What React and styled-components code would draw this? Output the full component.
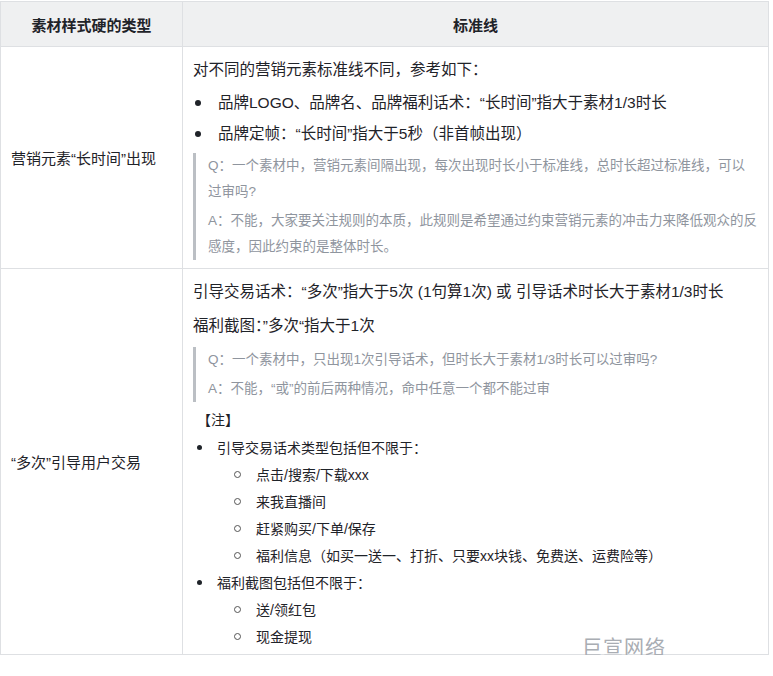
import React from "react";
import styled, { createGlobalStyle } from "styled-components";

const G = createGlobalStyle`
  body { margin: 0; background: #fff; font-family: "Liberation Sans", "Noto Sans CJK SC", sans-serif; color: #1f2329; }
`;
const Wrap = styled.div`position: relative; width: 769px; padding-top: 1px;`;
const Table = styled.table`
  border-collapse: collapse; width: 769px; table-layout: fixed;
  td, th { border: 1px solid #dee0e3; }
`;
const Th = styled.th`
  background: #eff0f1; height: 42px; font-size: 15px; font-weight: 600; color: #1f2329; vertical-align: middle;
`;
const Left = styled.td`font-size: 15px; padding: 0 0 0 10px; vertical-align: middle;`;
const Right = styled.td`padding: 6px 10px 4px 10px; font-size: 15.5px; line-height: 22px; vertical-align: top;`;
const P = styled.div`padding: ${p => p.$pad || "6px 0"};`;
const Bul = styled.div`
  display: flex; align-items: center; line-height: 22px;
  padding: ${p => p.$small ? "2.5px" : "4.5px"} 0;
  font-size: ${p => p.$small ? "14px" : "15.5px"};
  padding-left: ${p => p.$indent ? "37px" : "0"};
  &::before { content: ""; flex: none; width: ${p => p.$small ? 5 : 6}px; height: ${p => p.$small ? 5 : 6}px; border-radius: 50%;
    margin: 0 ${p => p.$small ? 15 : 17}px 0 ${p => p.$small ? 4 : 2}px;
    ${p => p.$hollow ? "border: 1px solid #555; background: transparent;" : "background:#1f2329;"} }
`;
const Quote = styled.div`
  border-left: 3px solid #bbbfc4; padding: 0 0 0 12px; margin: 4px 0; color: #8f959e; font-size: 13.5px; line-height: 26px;
`;
const QP = styled.div`margin: 3px 0;`;
const Note = styled.div`font-size: 14px; padding: 3px 0 3px 4px; line-height: 22px;`;
const Mark = styled.div`
  position: absolute; left: 582px; top: 632px; font-size: 20px; color: #a9adb3; letter-spacing: 1px;
`;

export default function App() {
  return (
    <Wrap>
      <G />
      <Table>
        <colgroup><col style={{ width: 182 }} /><col /></colgroup>
        <thead>
          <tr><Th>素材样式硬的类型</Th><Th>标准线</Th></tr>
        </thead>
        <tbody>
          <tr>
            <Left>营销元素“长时间”出现</Left>
            <Right>
              <P>对不同的营销元素标准线不同，参考如下：</P>
              <Bul>品牌LOGO、品牌名、品牌福利话术：“长时间”指大于素材1/3时长</Bul>
              <Bul>品牌定帧：“长时间”指大于5秒（非首帧出现）</Bul>
              <Quote>
                <QP>Q：一个素材中，营销元素间隔出现，每次出现时长小于标准线，总时长超过标准线，可以过审吗?</QP>
                <QP>A：不能，大家要关注规则的本质，此规则是希望通过约束营销元素的冲击力来降低观众的反感度，因此约束的是整体时长。</QP>
              </Quote>
            </Right>
          </tr>
          <tr>
            <Left>“多次”引导用户交易</Left>
            <Right>
              <P>引导交易话术：“多次”指大于5次 (1句算1次) 或 引导话术时长大于素材1/3时长</P>
              <P>福利截图：”多次“指大于1次</P>
              <Quote>
                <QP>Q：一个素材中，只出现1次引导话术，但时长大于素材1/3时长可以过审吗?</QP>
                <QP>A：不能，“或”的前后两种情况，命中任意一个都不能过审</QP>
              </Quote>
              <Note>【注】</Note>
              <Bul $small>引导交易话术类型包括但不限于：</Bul>
              <Bul $small $hollow $indent>点击/搜索/下载xxx</Bul>
              <Bul $small $hollow $indent>来我直播间</Bul>
              <Bul $small $hollow $indent>赶紧购买/下单/保存</Bul>
              <Bul $small $hollow $indent>福利信息（如买一送一、打折、只要xx块钱、免费送、运费险等）</Bul>
              <Bul $small>福利截图包括但不限于：</Bul>
              <Bul $small $hollow $indent>送/领红包</Bul>
              <Bul $small $hollow $indent>现金提现</Bul>
            </Right>
          </tr>
        </tbody>
      </Table>
      <Mark>巨宣网络</Mark>
    </Wrap>
  );
}
